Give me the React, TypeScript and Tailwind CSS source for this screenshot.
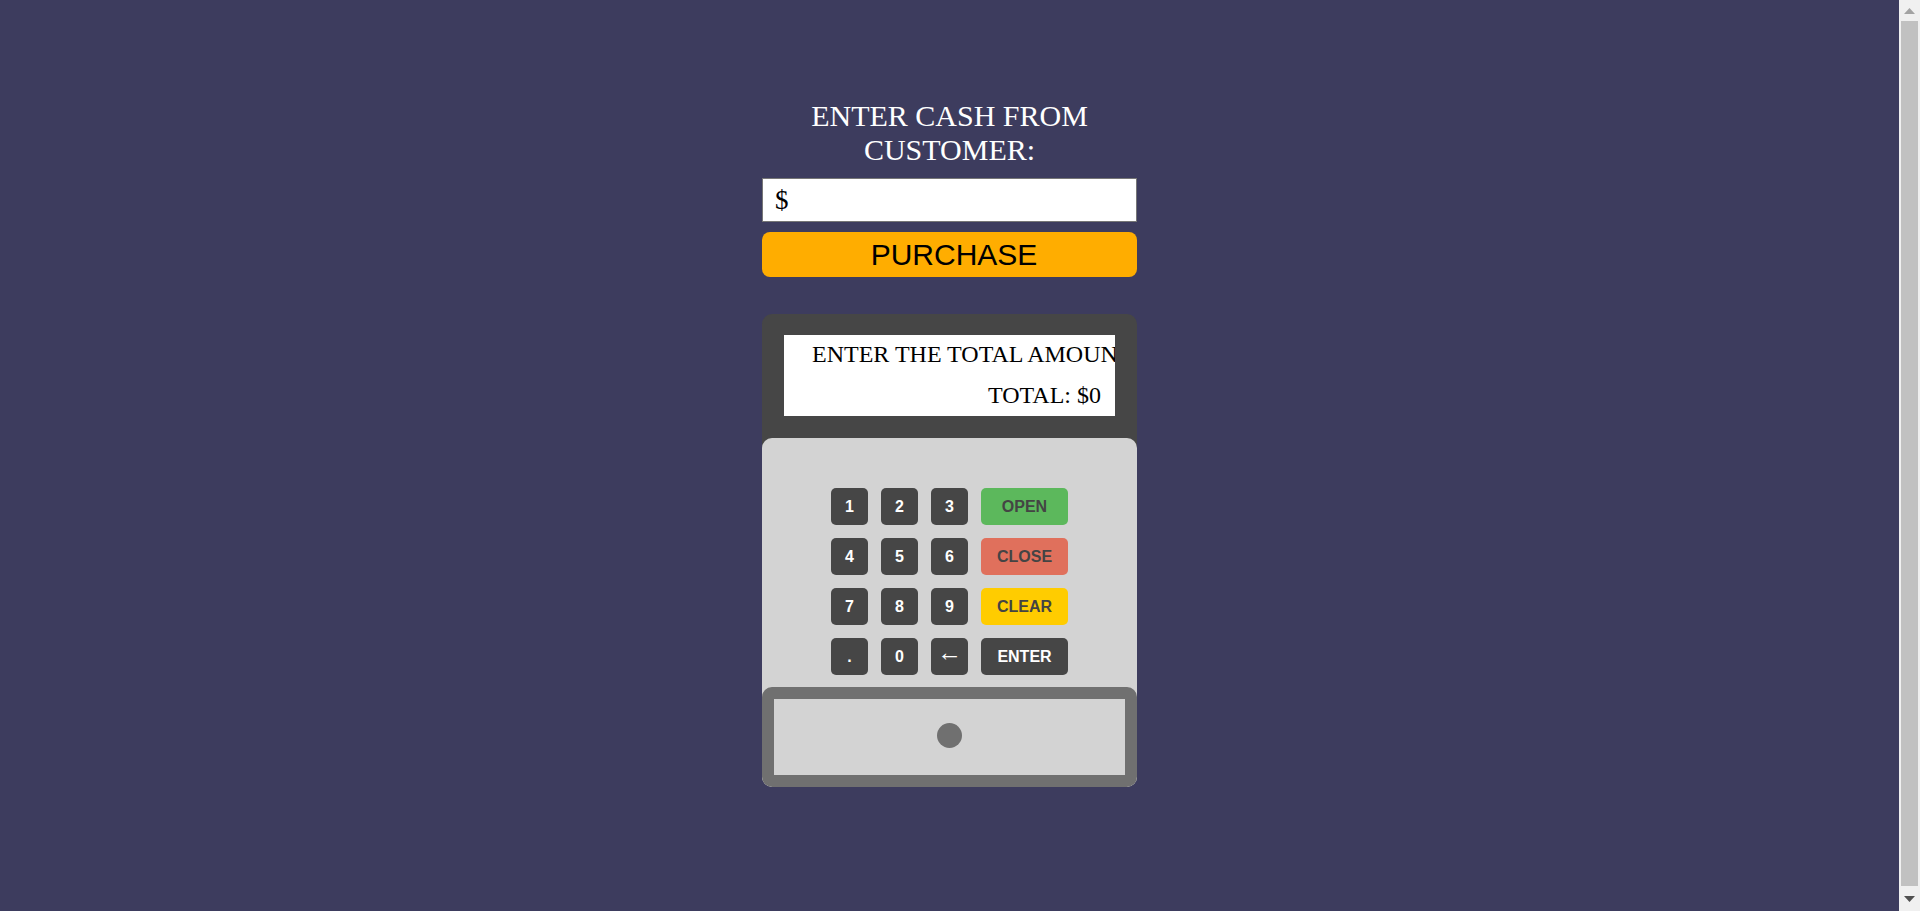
const serif = { fontFamily: '"Liberation Serif", "Times New Roman", serif' };

type Key = { label: string; cls: string };

const keys: Key[] = [
  { label: "1", cls: "bg-[#464646] text-white" },
  { label: "2", cls: "bg-[#464646] text-white" },
  { label: "3", cls: "bg-[#464646] text-white" },
  { label: "OPEN", cls: "bg-[#5cb85c] text-[#444444]" },
  { label: "4", cls: "bg-[#464646] text-white" },
  { label: "5", cls: "bg-[#464646] text-white" },
  { label: "6", cls: "bg-[#464646] text-white" },
  { label: "CLOSE", cls: "bg-[#e0705c] text-[#444444]" },
  { label: "7", cls: "bg-[#464646] text-white" },
  { label: "8", cls: "bg-[#464646] text-white" },
  { label: "9", cls: "bg-[#464646] text-white" },
  { label: "CLEAR", cls: "bg-[#ffcc00] text-[#444444]" },
  { label: ".", cls: "bg-[#464646] text-white" },
  { label: "0", cls: "bg-[#464646] text-white" },
  { label: "←", cls: "bg-[#464646] text-white font-normal text-[25px] leading-none pb-[8px]" },
  { label: "ENTER", cls: "bg-[#464646] text-white" },
];

function Scrollbar() {
  return (
    <div className="w-[21px] h-full bg-[#f0f0f0] flex flex-col items-center">
      <div className="h-[21px] flex items-center justify-center">
        <svg width="11" height="6" viewBox="0 0 11 6">
          <polygon points="0,6 11,6 5.5,0" fill="#a3a3a3" />
        </svg>
      </div>
      <div className="flex-1 w-[17px] bg-[#c1c1c1]" />
      <div className="h-[25px] flex items-center justify-center">
        <svg width="11" height="6" viewBox="0 0 11 6">
          <polygon points="0,0 11,0 5.5,6" fill="#505050" />
        </svg>
      </div>
    </div>
  );
}

export default function App() {
  return (
    <div
      className="h-[911px] w-full overflow-hidden bg-[#3d3c5e] flex"
      style={{ fontFamily: '"Liberation Sans", Arial, sans-serif' }}
    >
      <main className="flex-1 flex flex-col items-center pt-[99px]">
        <div className="w-[375px] flex flex-col">
          <h2 className="text-white text-[30px] leading-[34px] text-center font-normal" style={serif}>
            ENTER CASH FROM CUSTOMER:
          </h2>

          <input
            type="text"
            placeholder="$"
            className="mt-[11px] h-[44px] w-full bg-white border border-[#767676] px-[12px] text-[27px] text-black placeholder:text-black outline-none"
            style={serif}
          />

          <button className="mt-[10px] h-[45px] w-full rounded-lg bg-[#ffad00] text-black text-[30px] leading-none pl-[9px]">
            PURCHASE
          </button>

          <div className="mt-[37px] rounded-[10px] overflow-hidden bg-[#464646] flex flex-col">
            <div className="px-[22px] pt-[21px] pb-[22px]">
              <div className="h-[81px] bg-white pt-[5px] text-black text-[24px] leading-[28px]" style={serif}>
                <div className="whitespace-nowrap overflow-hidden pl-[28px]">ENTER THE TOTAL AMOUNT</div>
                <div className="mt-[13px] text-right pr-[14px]">TOTAL: $0</div>
              </div>
            </div>

            <div className="rounded-t-[10px] bg-[#d3d3d3] flex flex-col">
              <div className="pt-[50px] pb-[12px] flex justify-center">
                <div className="grid grid-cols-[37px_37px_37px_87px] auto-rows-[37px] gap-[13px]">
                  {keys.map((k) => (
                    <button
                      key={k.label}
                      className={`rounded-[5px] flex items-center justify-center text-[16px] font-bold ${k.cls}`}
                    >
                      {k.label}
                    </button>
                  ))}
                </div>
              </div>

              <div className="h-[100px] rounded-[10px] border-[12px] border-[#707070] bg-[#d3d3d3] flex items-center justify-center pb-[3px]">
                <div className="w-[25px] h-[25px] rounded-full bg-[#707070]" />
              </div>
            </div>
          </div>
        </div>
      </main>
      <Scrollbar />
    </div>
  );
}
